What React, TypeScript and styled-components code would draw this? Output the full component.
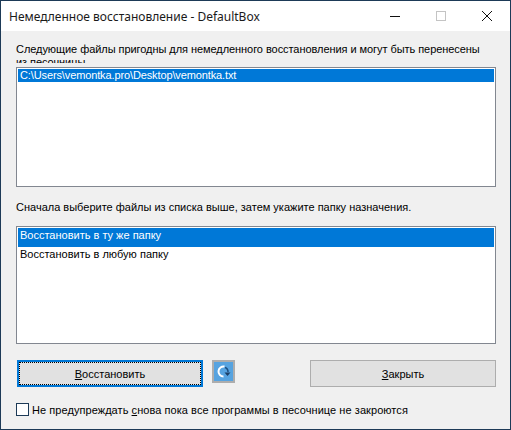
import { createGlobalStyle } from "styled-components";
import styled from "styled-components";

const GlobalStyle = createGlobalStyle`
  html, body {
    margin: 0;
    padding: 0;
    background: #fff;
  }
  * {
    box-sizing: border-box;
  }
`;

const S = {
  Window: styled.div`
    width: 511px;
    height: 430px;
    display: flex;
    flex-direction: column;
    border: 1px solid #1d3a57;
    background: #f0f0f0;
    font-family: "Liberation Sans", Arial, sans-serif;
    font-size: 11px;
    color: #000;
    overflow: hidden;
  `,
  TitleBar: styled.div`
    height: 30px;
    flex: none;
    display: flex;
    align-items: center;
    justify-content: space-between;
    background: #fff;
    padding-left: 8px;
  `,
  Title: styled.span`
    font-family: "Noto Sans", "Open Sans", sans-serif;
    font-size: 12px;
    color: #1a1a1a;
  `,
  Controls: styled.div`
    display: flex;
  `,
  Control: styled.div`
    width: 46px;
    height: 30px;
    display: flex;
    align-items: center;
    justify-content: center;
  `,
  Body: styled.div`
    flex: 1;
    display: flex;
    flex-direction: column;
    padding: 12px 14px 0 15px;
  `,
  Description: styled.p`
    margin: 0 0 4px;
    height: 20px;
    line-height: 13px;
    letter-spacing: -0.06px;
    white-space: nowrap;
    overflow: hidden;
    flex: none;
  `,
  Hint: styled.p`
    margin: 13px 0 0;
    height: 26px;
    line-height: 14px;
    flex: none;
  `,
  ListBox: styled.div<{ $height: number }>`
    height: ${(p) => p.$height}px;
    flex: none;
    padding: 1px;
    background: #fff;
    border: 1px solid #828790;
  `,
  PathRow: styled.div`
    height: 13px;
    line-height: 13px;
    padding-left: 2px;
    letter-spacing: -0.12px;
    background: #0078d7;
    color: #fff;
  `,
  ActionRow: styled.div<{ $selected?: boolean }>`
    height: 19px;
    line-height: 15px;
    padding-left: 2px;
    background: ${(p) => (p.$selected ? "#0078d7" : "transparent")};
    color: ${(p) => (p.$selected ? "#fff" : "#000")};
  `,
  Buttons: styled.div`
    display: flex;
    align-items: flex-start;
    margin-top: 16px;
    padding-left: 1px;
    flex: none;
  `,
  Button: styled.div<{ $primary?: boolean }>`
    width: 186px;
    height: 27px;
    display: flex;
    align-items: center;
    justify-content: center;
    background: #e1e1e1;
    border: ${(p) => (p.$primary ? "2px solid #0078d7" : "1px solid #adadad")};
    outline: ${(p) => (p.$primary ? "1px dotted #000" : "none")};
    outline-offset: -3px;
  `,
  RefreshButton: styled.div`
    width: 23px;
    height: 23px;
    margin-left: 9px;
    margin-right: 75px;
    border: 2px solid #adadad;
    background: #56a3e0;
    display: flex;
    align-items: center;
    justify-content: center;
  `,
  Key: styled.span`
    text-decoration: underline;
  `,
  CheckRow: styled.label`
    display: flex;
    align-items: center;
    gap: 3px;
    margin-top: 16px;
    height: 13px;
    flex: none;
    letter-spacing: 0.06px;
  `,
  CheckBox: styled.span`
    width: 13px;
    height: 13px;
    flex: none;
    background: #fff;
    border: 1px solid #1d3a57;
  `,
};

const App = () => {
  return (
    <>
      <GlobalStyle />
      <S.Window>
        <S.TitleBar>
          <S.Title>Немедленное восстановление - DefaultBox</S.Title>
          <S.Controls>
            <S.Control>
              <svg width="10" height="10" viewBox="0 0 10 10">
                <path d="M0 5.5H10" stroke="#111" strokeWidth="1" />
              </svg>
            </S.Control>
            <S.Control>
              <svg width="10" height="10" viewBox="0 0 10 10">
                <rect x="0.5" y="0.5" width="9" height="9" fill="none" stroke="#c4c4c4" />
              </svg>
            </S.Control>
            <S.Control>
              <svg width="10" height="10" viewBox="0 0 10 10">
                <path d="M0 0L10 10M10 0L0 10" stroke="#111" strokeWidth="1" />
              </svg>
            </S.Control>
          </S.Controls>
        </S.TitleBar>
        <S.Body>
          <S.Description>
            Следующие файлы пригодны для немедленного восстановления и могут быть перенесены
            <br />
            из песочницы
          </S.Description>
          <S.ListBox $height={120}>
            <S.PathRow>C:\Users\vemontka.pro\Desktop\vemontka.txt</S.PathRow>
          </S.ListBox>
          <S.Hint>Сначала выберите файлы из списка выше, затем укажите папку назначения.</S.Hint>
          <S.ListBox $height={118}>
            <S.ActionRow $selected>Восстановить в ту же папку</S.ActionRow>
            <S.ActionRow>Восстановить в любую папку</S.ActionRow>
          </S.ListBox>
          <S.Buttons>
            <S.Button $primary>
              <span>
                <S.Key>В</S.Key>осстановить
              </span>
            </S.Button>
            <S.RefreshButton>
              <svg width="15" height="15" viewBox="0 0 15 15">
                <path d="M8.5 2.6A5 5 0 1 0 7.5 12.5" fill="none" stroke="#fff" strokeWidth="2" />
                <path d="M9 3.5A4.5 4.5 0 0 1 12 8" fill="none" stroke="#1c4f80" strokeWidth="1.5" />
                <path d="M8.5 8.5H14.5L11.5 12Z" fill="#1c3f66" />
              </svg>
            </S.RefreshButton>
            <S.Button>
              <span>
                <S.Key>З</S.Key>акрыть
              </span>
            </S.Button>
          </S.Buttons>
          <S.CheckRow>
            <S.CheckBox />
            <span>
              Не предупреждать <S.Key>с</S.Key>нова пока все программы в песочнице не закроются
            </span>
          </S.CheckRow>
        </S.Body>
      </S.Window>
    </>
  );
};

export default App;
